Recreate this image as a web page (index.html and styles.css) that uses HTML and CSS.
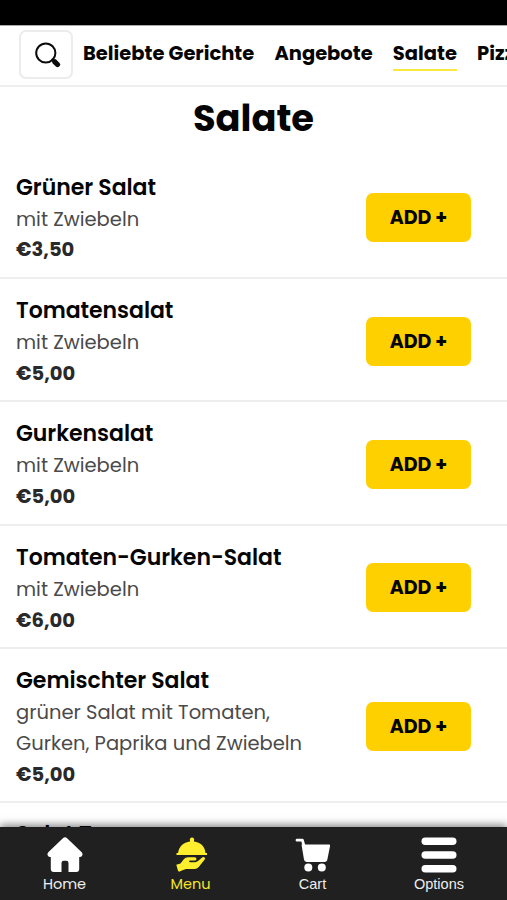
FILE: index.html
```html
<!DOCTYPE html>
<html lang="de">
<head>
<meta charset="utf-8">
<title>Salate</title>
<link rel="stylesheet" href="styles.css">
</head>
<body>
<div class="app">
  <div class="status"></div>
  <header class="top">
    <button class="search" aria-label="Suche">
      <svg width="26" height="26" viewBox="0 0 26 26" fill="none" stroke="#0b0b0b" stroke-linecap="round"><circle cx="10.8" cy="11" r="9.6" stroke-width="2"/><path d="M17.5 17.7l2 2" stroke-width="2.4"/><path d="M19.800 19.800l2.700 2.700" stroke-width="5.200"/></svg>
    </button>
    <nav class="cats">
      <a class="cat">Beliebte Gerichte</a>
      <a class="cat">Angebote</a>
      <a class="cat active">Salate</a>
      <a class="cat">Pizza</a>
    </nav>
  </header>
  <main class="content">
    <h1 class="title">Salate</h1>
    <section class="item"><div class="info"><h2 class="name">Grüner Salat</h2><p class="desc">mit Zwiebeln</p><p class="price">€3,50</p></div><button class="add">ADD +</button></section>
    <section class="item"><div class="info"><h2 class="name">Tomatensalat</h2><p class="desc">mit Zwiebeln</p><p class="price">€5,00</p></div><button class="add">ADD +</button></section>
    <section class="item"><div class="info"><h2 class="name">Gurkensalat</h2><p class="desc">mit Zwiebeln</p><p class="price">€5,00</p></div><button class="add">ADD +</button></section>
    <section class="item"><div class="info"><h2 class="name">Tomaten-Gurken-Salat</h2><p class="desc">mit Zwiebeln</p><p class="price">€6,00</p></div><button class="add">ADD +</button></section>
    <section class="item tall"><div class="info"><h2 class="name">Gemischter Salat</h2><p class="desc">grüner Salat mit Tomaten,<br>Gurken, Paprika und Zwiebeln</p><p class="price">€5,00</p></div><button class="add">ADD +</button></section>
    <section class="item next"><div class="info"><h2 class="name">Salat T</h2></div></section>
  </main>
  <footer class="tabs">
    <a class="tab"><svg width="36" height="36" viewBox="0 0 36 36" fill="#fff"><path d="M15.9 1.300a3 3 0 0 1 4.200 0L34.700 15.300a2.800 2.800 0 0 1-2.500 4.700V32a3 3 0 0 1-3 3H21.500V26a2.200 2.200 0 0 0-2.200-2.200h-2.600A2.200 2.200 0 0 0 14.500 26v9H6.800a3 3 0 0 1-3-3V20a2.800 2.800 0 0 1-2.500-4.700z"/></svg><span class="label">Home</span></a>
    <a class="tab menu"><svg width="36" height="36" viewBox="0 0 36 36" fill="#ffee2e"><path d="M3.500 17.500v-1.500h1.500C6 9.500 10.500 5.300 17 4.500v-1a2.200 2.200 0 1 1 4 0v1C27.500 5.300 32 9.500 32.500 16H34v2H3.500z"/><path d="M3.300 27.800L7.500 26.500 11 22Q12.500 20.200 15 20.200h6.500q2 0 2 1.700t-2 1.700h-4.500q-.9 0-.9 .8t.9.8h5.300q1.400 0 2.700-1.100l4.500-3.800q1.100-.8 2.100.1t.1 2l-6 7.500Q24 32 21.500 32H13l-3.500 1.300-3.500 1.500-1-1z"/></svg><span class="label">Menu</span></a>
    <a class="tab cart"><svg width="36" height="36" viewBox="0 0 36 36" fill="#fff"><path d="M2 3.200h5.400l1.400 5" fill="none" stroke="#fff" stroke-width="2.800" stroke-linecap="round" stroke-linejoin="round"/><path d="M6.500 7.500H34.200q1.100 0 .9 1.200L32.400 22.300Q32 25 29.500 25H12Q9.400 25 8.900 22z"/><circle cx="13.300" cy="30.500" r="4"/><circle cx="26.800" cy="30.500" r="4"/></svg><span class="label">Cart</span></a>
    <a class="tab options"><svg width="36" height="36" viewBox="0 0 36 36" fill="#fff"><rect x=".5" y=".500" width="35" height="7.500" rx="3.750"/><rect x=".5" y="14.200" width="35" height="7.500" rx="3.750"/><rect x=".5" y="27.900" width="35" height="7.500" rx="3.750"/></svg><span class="label">Options</span></a>
  </footer>
</div>
</body>
</html>
```

FILE: styles.css
```css
* { box-sizing: border-box; }
body { margin: 0; background: #fff; font-family: Poppins, Inter, sans-serif; color: #050505; }
h1, h2, p { margin: 0; }
button { font: inherit; color: inherit; padding: 0; }
.app { height: 900px; display: flex; flex-direction: column; overflow: hidden; }
.status { height: 25px; flex: none; background: #000; }
.top { height: 62px; flex: none; display: flex; border-top: 1px solid #aaa; border-bottom: 2px solid #eee; padding: 4px 0 0 19px; overflow: hidden; }
.search { width: 54px; height: 49px; flex: none; border: 2px solid #ececec; border-radius: 7px; background: #fff; display: flex; align-items: center; justify-content: center; }
.search svg { margin-left: 3px; }
.cats { display: flex; gap: 20.200px; margin-left: 10px; padding-top: 8px; }
.cat { height: 33px; line-height: 32px; font-size: 19.480px; font-weight: 700; white-space: nowrap; flex: none; }
.active { border-bottom: 2px solid #f8e93c; }
.content { flex: 1; min-height: 0; overflow: hidden; }
.title { height: 68.500px; line-height: 63px; text-align: center; font-size: 36.800px; font-weight: 700; }
.item { display: flex; align-items: flex-start; justify-content: space-between; height: 123.400px; padding: 16.200px 36px 0 16px; border-bottom: 2px solid #eee; }
.tall { height: 153.700px; }
.name { font-size: 22px; line-height: 32px; font-weight: 600; letter-spacing: -0.040px; white-space: nowrap; }
.desc { font-size: 19.500px; line-height: 30.800px; font-weight: 400; color: #4a4a4a; white-space: nowrap; padding-top: 1px; }
.price { font-size: 19.500px; line-height: 30px; font-weight: 700; color: #292929; }
.add { width: 105px; height: 49px; flex: none; border: 0; border-radius: 7px; background: #ffd000; font-size: 19px; font-weight: 700; margin-top: 21.600px; }
.tall .add { margin-top: 37px; }
.tabs { height: 73px; flex: none; display: flex; background: #202020; box-shadow: 0 -2px 8px rgba(0,0,0,.5); position: relative; padding: 10px 0 0 2px; }
.tab { width: 125px; flex: none; display: flex; flex-direction: column; align-items: center; color: #eee; }
.label { font-size: 14.500px; line-height: 20px; margin-top: 1px; }
.menu { color: #f5e52e; width: 127px; }
.cart { width: 117px; }
.options { width: 136px; }
.cart, .options { font-family: "Liberation Sans", sans-serif; }
```
